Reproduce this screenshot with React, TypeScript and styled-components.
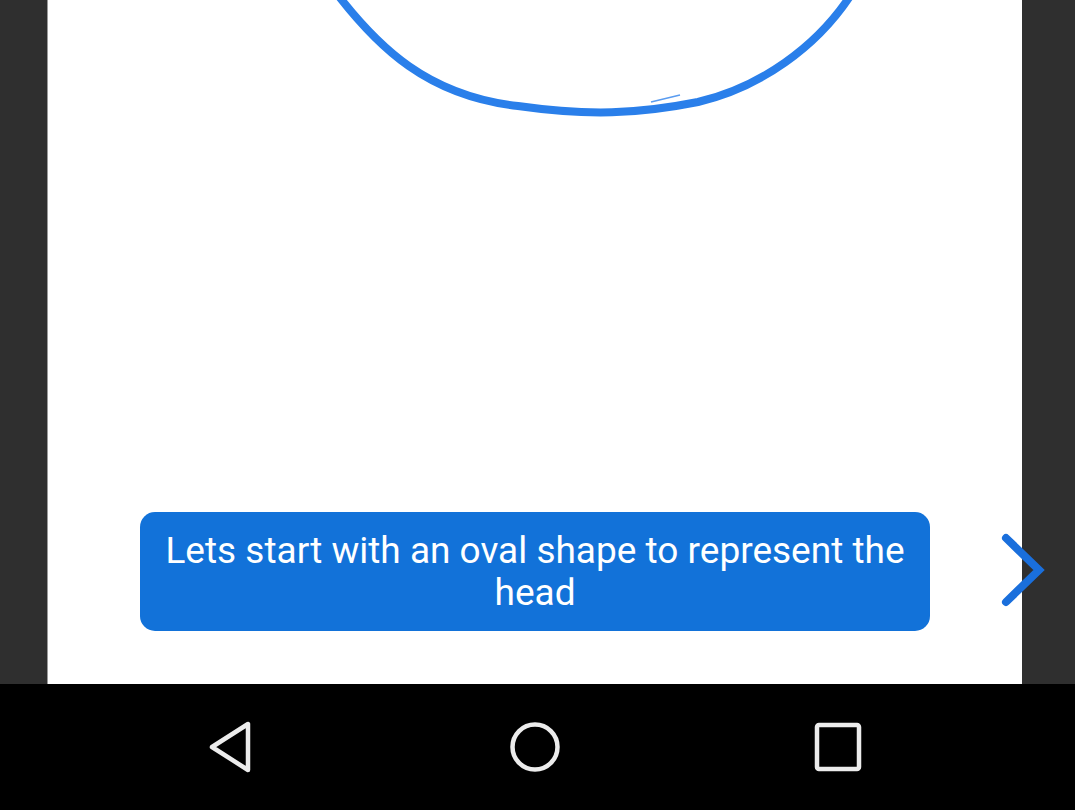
import React from "react";
import styled, { createGlobalStyle } from "styled-components";

const Global = createGlobalStyle`
  html, body { margin: 0; padding: 0; background: #000; }
  body { font-family: Roboto, "Noto Sans", sans-serif; }
`;

const Screen = styled.div`
  width: 1075px;
  height: 810px;
  display: flex;
  flex-direction: column;
  overflow: hidden;
`;

const Stage = styled.div`
  position: relative;
  height: 684px;
  display: flex;
  background: #2f2f2f;
`;

const Gutter = styled.div<{ $w: number }>`
  width: ${(p) => p.$w}px;
  flex: none;
`;

const Canvas = styled.div`
  position: relative;
  width: 975px;
  flex: none;
  background: #ffffff;
  border-left: 1px solid #9a9a9a;
  box-sizing: border-box;
  display: flex;
  flex-direction: column;
  justify-content: flex-end;
  padding: 0 0 53px 92px;
  overflow: hidden;
`;

const Drawing = styled.svg`
  position: absolute;
  left: 0;
  top: 0;
`;

const Bubble = styled.div`
  width: 790px;
  height: 119px;
  box-sizing: border-box;
  background: #1272d9;
  border-radius: 15px;
  color: #ffffff;
  font-family: Roboto, "Noto Sans", sans-serif;
  font-size: 37px;
  line-height: 42px;
  text-align: center;
  display: flex;
  align-items: center;
  justify-content: center;
  padding: 0 18px;
`;

const NextArrow = styled.svg`
  position: absolute;
  left: 998px;
  top: 530px;
`;

const NavBar = styled.div`
  height: 126px;
  background: #000;
  display: flex;
  justify-content: space-between;
  align-items: center;
  padding: 0 213px 0 207px;
`;

const NavButton = styled.div`
  display: flex;
  justify-content: center;
  align-items: center;
`;

export default function App() {
  return (
    <Screen>
      <Global />
      <Stage>
        <Gutter $w={47} />
        <Canvas>
          <Drawing width="975" height="200" viewBox="0 0 975 200">
            <path
              d="M 286 -10 C 330 48, 380 96, 470 106 C 540 116, 590 114, 650 102 C 710 88, 770 48, 806 -10"
              fill="none"
              stroke="#2a7fea"
              strokeWidth="8"
              strokeLinecap="round"
            />
            <path d="M 603 102 L 632 95" stroke="#5a9cf0" strokeWidth="1.5" fill="none" />
          </Drawing>
          <Bubble>Lets start with an oval shape to represent the head</Bubble>
        </Canvas>
        <Gutter $w={53} />
        <NextArrow width="50" height="80" viewBox="0 0 50 80">
          <path
            d="M 8 8 L 41 40 L 8 72"
            fill="none"
            stroke="#1a6fdc"
            strokeWidth="8"
            strokeLinecap="round"
            strokeLinejoin="miter"
          />
        </NextArrow>
      </Stage>
      <NavBar>
        <NavButton>
          <svg width="48" height="52" viewBox="0 0 48 52">
            <path
              d="M 41 3 L 41 49 L 5 26 Z"
              fill="none"
              stroke="#ececec"
              strokeWidth="4.5"
              strokeLinejoin="round"
            />
          </svg>
        </NavButton>
        <NavButton>
          <svg width="54" height="54" viewBox="0 0 54 54">
            <circle cx="27" cy="27" r="22.5" fill="none" stroke="#ececec" strokeWidth="4.5" />
          </svg>
        </NavButton>
        <NavButton>
          <svg width="48" height="50" viewBox="0 0 48 50">
            <rect x="3" y="3" width="42" height="44" rx="2" fill="none" stroke="#ececec" strokeWidth="4.5" />
          </svg>
        </NavButton>
      </NavBar>
    </Screen>
  );
}
